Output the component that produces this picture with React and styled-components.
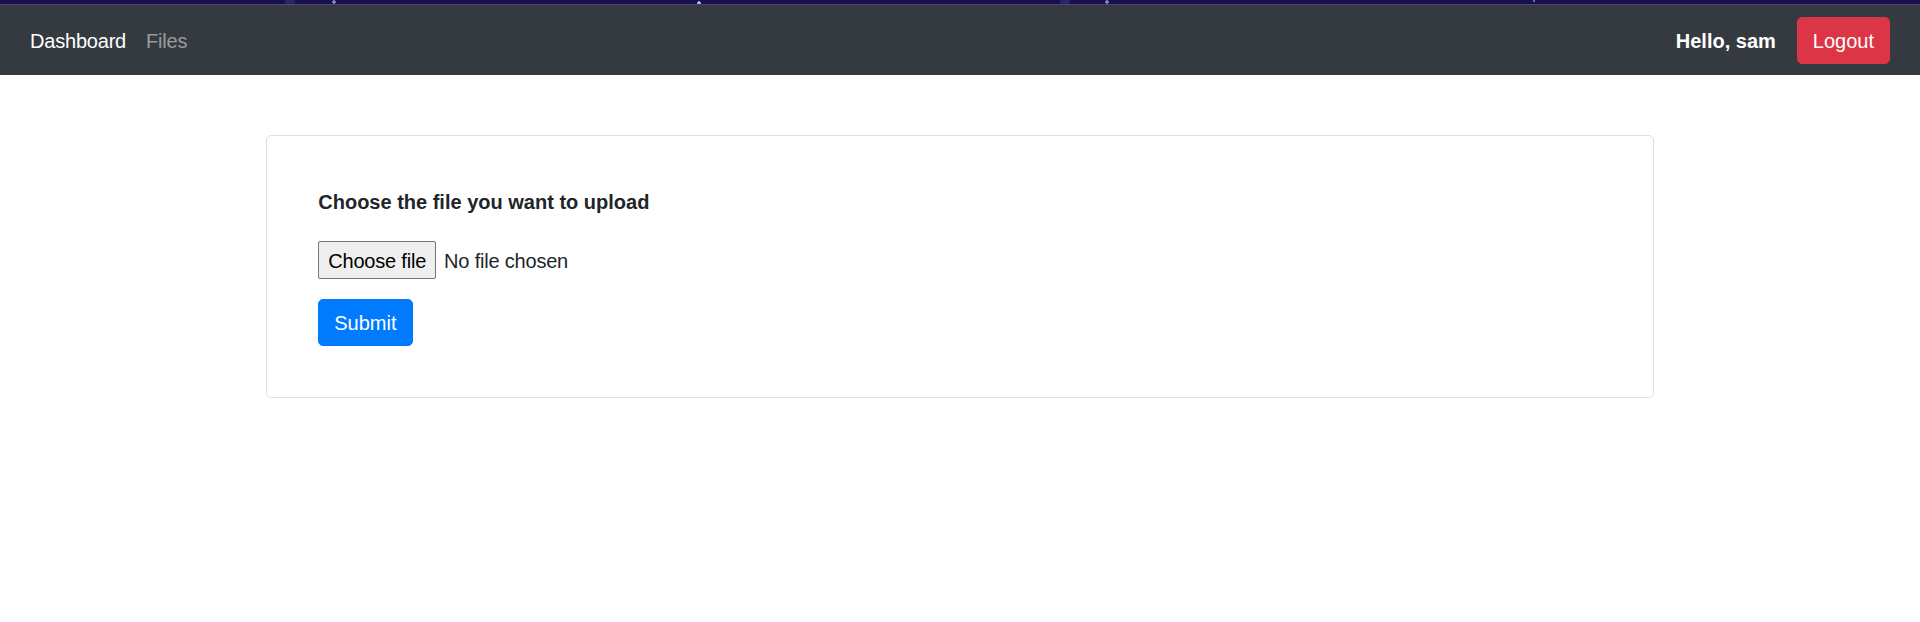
import styled, { createGlobalStyle } from 'styled-components';

const GlobalStyle = createGlobalStyle`
  * { box-sizing: border-box; }
  body {
    margin: 0;
    background: #fff;
    color: #212529;
    font-family: "Segoe UI", "Liberation Sans", Arial, sans-serif;
    font-size: 20px;
    line-height: 1.5;
  }
`;

const App = () => {
  return (
    <>
      <GlobalStyle />
      <TopStrip />
      <Navbar>
        <NavLinks>
          <NavLink href="#" $active>Dashboard</NavLink>
          <NavLink href="#">Files</NavLink>
        </NavLinks>
        <UserArea>
          <Greeting>Hello, sam</Greeting>
          <Button $variant="danger">Logout</Button>
        </UserArea>
      </Navbar>
      <Container>
        <Card>
          <form onSubmit={(e) => e.preventDefault()}>
            <Label htmlFor="upload">Choose the file you want to upload</Label>
            <FileRow>
              <HiddenInput id="upload" type="file" />
              <FileButton htmlFor="upload">Choose file</FileButton>
              <FileStatus>No file chosen</FileStatus>
            </FileRow>
            <Button type="submit" $variant="primary">Submit</Button>
          </form>
        </Card>
      </Container>
    </>
  );
};

export default App;

// Styles
const TopStrip = styled.div`
  height: 5px;
  background:
    radial-gradient(circle at 334px 2px, #8d86c4 0 1.5px, transparent 2px),
    radial-gradient(circle at 699px 3px, #b9b4e6 0 1.5px, transparent 2px),
    radial-gradient(circle at 1107px 2px, #8d86c4 0 1.5px, transparent 2px),
    radial-gradient(circle at 1534px 1px, #6f69a8 0 1px, transparent 1.5px),
    radial-gradient(circle at 290px 1px, #2c2468 0 4px, transparent 6px),
    radial-gradient(circle at 1065px 1px, #2c2468 0 4px, transparent 6px),
    #1a0f4d;
  border-bottom: 1px solid #4a4476;
`;

const Navbar = styled.nav`
  height: 70px;
  background-color: #343a40;
  padding: 1px 30px 0 20px;
  display: flex;
  align-items: center;
  justify-content: space-between;
`;

const NavLinks = styled.div`
  display: flex;
  align-items: center;
`;

const NavLink = styled.a`
  padding: 10px 10px;
  font-size: 20px;
  letter-spacing: -0.2px;
  color: ${({ $active }) => ($active ? '#fff' : 'rgba(255, 255, 255, 0.5)')};
  text-decoration: none;
`;

const UserArea = styled.div`
  display: flex;
  align-items: center;
  gap: 21px;
`;

const Greeting = styled.span`
  color: #fff;
  font-weight: 700;
`;

const Button = styled.button`
  font-family: inherit;
  font-size: 20px;
  line-height: 30px;
  padding: 7.5px 15px;
  border: 1px solid ${({ $variant }) => ($variant === 'danger' ? '#dc3545' : '#007bff')};
  border-radius: 5px;
  color: #fff;
  background-color: ${({ $variant }) => ($variant === 'danger' ? '#dc3545' : '#007bff')};
  cursor: pointer;
`;

const Container = styled.div`
  width: 1425px;
  margin: 60px auto 0;
  padding: 0 18.75px;
`;

const Card = styled.div`
  border: 1px solid rgba(0, 0, 0, 0.125);
  border-radius: 5px;
  padding: 51px;
`;

const Label = styled.label`
  display: block;
  font-weight: 700;
  line-height: 30px;
  margin-bottom: 24px;
`;

const FileRow = styled.div`
  display: flex;
  align-items: center;
  gap: 8px;
  margin-bottom: 20px;
  letter-spacing: -0.2px;
`;

const HiddenInput = styled.input`
  display: none;
`;

const FileButton = styled.label`
  height: 38px;
  display: inline-flex;
  align-items: center;
  padding: 1px 9px 0;
  background: #efefef;
  border: 1px solid #767676;
  border-radius: 2px;
  color: #000;
  cursor: pointer;
`;

const FileStatus = styled.span`
  color: #212529;
  padding-top: 1px;
`;
